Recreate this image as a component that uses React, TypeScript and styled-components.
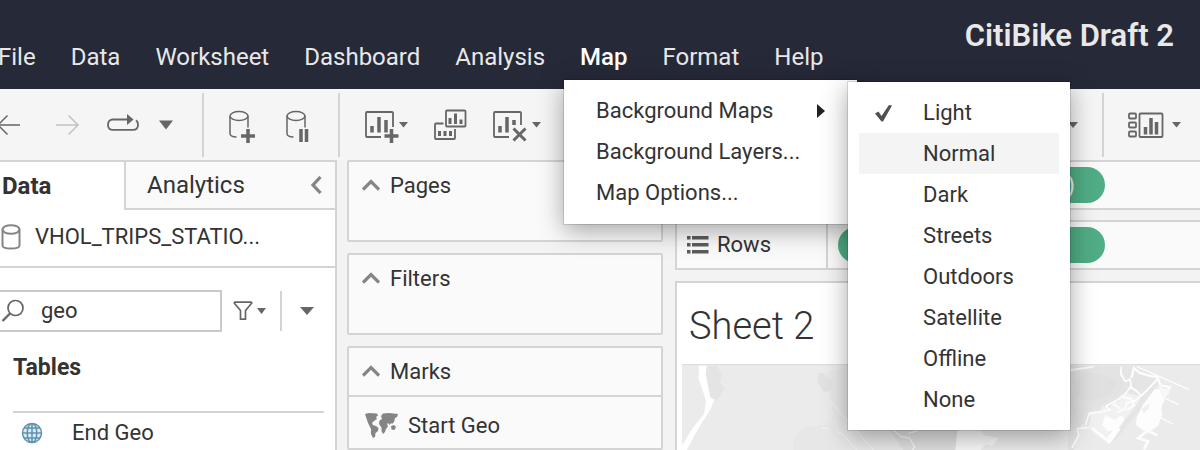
import React from "react";
import styled, { createGlobalStyle, css } from "styled-components";

const ink = "#333333";
const icon = "#666666";
const line = "#d4d4d4";
const green = "#50ad85";

const GlobalStyle = createGlobalStyle`
  *, *::before, *::after { box-sizing: border-box; }
  body {
    margin: 0;
    background: #f3f3f3;
    color: ${ink};
    font-family: Roboto, "Liberation Sans", sans-serif;
    font-size: 22px;
    line-height: 32px;
  }
  button, input { font: inherit; color: inherit; }
  svg { display: block; flex: none; }
`;

const bareButton = css`
  border: 0;
  padding: 0;
  background: none;
  cursor: pointer;
`;

const Page = styled.div`
  display: flex;
  flex-direction: column;
  height: 100vh;
  overflow: hidden;
`;

/* ---------- Header and menus ---------- */

const Header = styled.header`
  display: flex;
  justify-content: space-between;
  flex: none;
  padding: 18px 26px 16px 0;
  background: #262938;
  color: #e8e8e8;
`;

const MenuBar = styled.nav`
  display: flex;
  align-self: flex-end;
  gap: 35px;
  margin-left: -2px;
  padding-top: 23px;
  font-size: 24px;
`;

const MenuSlot = styled.div`
  position: relative;
`;

const MenuButton = styled.button<{ $open?: boolean }>`
  ${bareButton}
  display: block;
  color: ${(p) => (p.$open ? "#ffffff" : "#e8e8e8")};
  font-weight: ${(p) => (p.$open ? 500 : 400)};
`;

const WorkbookTitle = styled.h1`
  margin: 0;
  font-size: 31px;
  font-weight: 600;
  line-height: 36px;
`;

const Popup = styled.div`
  position: absolute;
  z-index: 2;
  background: #ffffff;
  color: ${ink};
  font-size: 22px;
  box-shadow: 0 0 0 1px rgba(0, 0, 0, 0.12), 0 6px 24px rgba(0, 0, 0, 0.36);
`;

const MapMenu = styled(Popup)`
  top: calc(100% + 7px);
  left: -16px;
  width: 293px;
  padding: 10px 10px 11px;
`;

const BasemapMenu = styled(Popup)`
  top: 2px;
  left: 284px;
  width: 222px;
  padding: 10px 11px;
`;

const MenuRow = styled.button<{ $hover?: boolean; $indent: number }>`
  ${bareButton}
  display: flex;
  align-items: center;
  width: 100%;
  height: 41px;
  padding-left: ${(p) => p.$indent}px;
  padding-right: 22px;
  background: ${(p) => (p.$hover ? "#f4f4f4" : "transparent")};
  text-align: left;
  white-space: nowrap;
  > svg:last-child { margin-left: auto; }
`;

const CheckSlot = styled.span`
  display: flex;
  width: 48px;
`;

/* ---------- Toolbar ---------- */

const Toolbar = styled.div`
  display: flex;
  align-items: center;
  flex: none;
  height: 71px;
  background: #f5f5f5;
`;

const ToolGroup = styled.div<{ $edge?: boolean; $end?: boolean }>`
  display: flex;
  gap: 24px;
  padding: 0 24px 0 ${(p) => (p.$edge ? 0 : 24)}px;
  margin-left: ${(p) => (p.$end ? "auto" : 0)};
`;

const LastToolGroup = styled(ToolGroup)`
  padding-right: 18px;
`;

const Tool = styled.button`
  ${bareButton}
  display: flex;
`;

const Rule = styled.span<{ $h: number }>`
  flex: none;
  width: 2px;
  height: ${(p) => p.$h}px;
  background: ${line};
`;

/* ---------- Data pane ---------- */

const Workspace = styled.div`
  display: flex;
  flex: 1;
  min-height: 0;
`;

const DataPane = styled.aside`
  flex: none;
  width: 337px;
  border: solid ${line};
  border-width: 2px 2px 0 0;
  background: #ffffff;
`;

const Tabs = styled.div`
  display: flex;
  height: 48px;
  font-size: 24px;
`;

const DataTab = styled.button`
  ${bareButton}
  width: 124px;
  padding-left: 2px;
  text-align: left;
  font-weight: 700;
`;

const AnalyticsTab = styled.div`
  display: flex;
  flex: 1;
  align-items: center;
  justify-content: space-between;
  padding: 0 13px 0 21px;
  border: solid ${line};
  border-width: 0 0 2px 2px;
  background: #fafafa;
`;

const PlainButton = styled.button`
  ${bareButton}
`;

const Source = styled.div`
  display: flex;
  align-items: center;
  gap: 14px;
  height: 58px;
  padding: 0 0 2px 1px;
  border-bottom: 2px solid ${line};
`;

const SearchRow = styled.div`
  display: flex;
  align-items: center;
  padding: 22px 21px 18px 0;
`;

const SearchBox = styled.label`
  display: flex;
  align-items: center;
  flex: 1;
  gap: 16px;
  min-width: 0;
  height: 42px;
  border: 2px solid #c9c9c9;
  border-left: 0;
`;

const SearchInput = styled.input`
  flex: 1;
  min-width: 0;
  padding: 0;
  border: 0;
  outline: 0;
  background: none;
`;

const SearchTools = styled.div`
  display: flex;
  align-items: center;
  padding-left: 11px;
  gap: 13px;
`;

const FilterTool = styled.button`
  ${bareButton}
  display: flex;
  align-items: center;
  gap: 4px;
  padding-right: 1px;
`;

const MoreTool = styled.button`
  ${bareButton}
  display: flex;
  padding-left: 5px;
`;

const Tables = styled.section`
  padding: 0 11px 0 13px;
`;

const TablesTitle = styled.h2`
  margin: 0;
  padding: 1px 0 26px;
  border-bottom: 2px solid ${line};
  font-size: 23px;
  line-height: 34px;
`;

const Field = styled.div`
  display: flex;
  align-items: center;
  gap: 29px;
  padding: 4px 0 0 8px;
`;

/* ---------- Cards ---------- */

const Cards = styled.div`
  display: flex;
  flex: none;
  flex-direction: column;
  gap: 11px;
  width: 338px;
  padding: 0 12px 0 10px;
`;

const Card = styled.section<{ $grow?: boolean }>`
  flex: ${(p) => (p.$grow ? "1" : "none")};
  min-height: 82px;
  border: 2px solid ${line};
  border-radius: 2px;
  background: #fafafa;
`;

const CardTitle = styled.button<{ $line?: boolean }>`
  ${bareButton}
  display: flex;
  align-items: center;
  gap: 10px;
  width: 100%;
  height: ${(p) => (p.$line ? 49 : 48)}px;
  padding-left: 13px;
  border-bottom: ${(p) => (p.$line ? `2px solid ${line}` : "0")};
`;

const Mark = styled.div`
  display: flex;
  align-items: center;
  gap: 10px;
  padding: 13px 0 0 16px;
`;

/* ---------- Shelves and view ---------- */

const Stage = styled.main`
  display: flex;
  flex: 1;
  flex-direction: column;
  gap: 10px;
  min-width: 0;
`;

const Shelf = styled.div`
  display: flex;
  flex: none;
  height: 50px;
  border: solid ${line};
  border-width: 2px 0 2px 2px;
  background: #fafafa;
`;

const ShelfLabel = styled.div`
  display: flex;
  align-items: center;
  gap: 8px;
  width: 151px;
  padding-left: 10px;
  border-right: 2px solid ${line};
`;

const Pill = styled.div`
  width: 267px;
  height: 36px;
  margin: 5px 0 0 10px;
  padding: 2px 30px 0 0;
  border-radius: 18px;
  background: ${green};
  color: #e4f3ec;
  font-size: 24px;
  text-align: right;
`;

const View = styled.section`
  display: flex;
  flex: 1;
  flex-direction: column;
  min-height: 0;
  margin-top: 1px;
  padding-left: 5px;
  border: solid ${line};
  border-width: 2px 0 0 2px;
  background: #ffffff;
`;

const SheetTitle = styled.h2`
  margin: 0;
  padding: 21px 0 16px 7px;
  font-size: 38px;
  font-weight: 300;
  line-height: 44px;
`;

const MapCanvas = styled.div`
  flex: 1;
  min-height: 0;
  overflow: hidden;
  background: #ebebeb;
`;

/* ---------- Drawings ---------- */

const Caret = ({ w = 10, h = 6 }: { w?: number; h?: number }) => (
  <svg width={w} height={h} viewBox="0 0 10 6" preserveAspectRatio="none">
    <path d="M0 0h10L5 6z" fill={icon} />
  </svg>
);

const Drawing = ({ w, children }: { w: number; children: React.ReactNode }) => (
  <svg width={w} height="40" viewBox={`0 0 ${w} 40`} fill="none" stroke={icon} strokeWidth="1.5">
    {children}
  </svg>
);

const Chevron = ({ d, w, h }: { d: string; w: number; h: number }) => (
  <svg width={w} height={h} viewBox={`0 0 ${w} ${h}`} fill="none" stroke="#858585" strokeWidth="3.2">
    <path d={d} />
  </svg>
);

const UpChevron = () => <Chevron w={18} h={16} d="M1 11.5l8-8 8 8" />;

const Cylinder = () => (
  <>
    <ellipse cx="11" cy="11" rx="9" ry="4.5" />
    <path d="M2 11v17.500c0 2 2.500 3.400 6.500 3.400M20 11v11.500" />
  </>
);

const CheckIcon = () => (
  <svg width="18" height="18" viewBox="0 0 18 18" fill="#505050">
    <path d="M0 9.500l3.500-2 3 4.500L14 1l3 .5L8 17.500H6.500z" />
  </svg>
);

const DatabaseIcon = () => (
  <svg width="20" height="26" viewBox="0 0 20 26" fill="none" stroke="#858585" strokeWidth="2">
    <ellipse cx="10" cy="5.500" rx="8.500" ry="4.300" />
    <path d="M1.500 5.500v16c0 2 3.500 3 8.500 3s8.500-1 8.500-3v-16" />
  </svg>
);

const SearchIcon = () => (
  <svg width="25" height="24" viewBox="0 0 25 24" fill="none" stroke={icon} strokeWidth="1.700">
    <circle cx="15.500" cy="9" r="7.500" />
    <path d="M10 14.500L2.500 22" strokeWidth="2.400" />
  </svg>
);

const FunnelIcon = () => (
  <svg width="20" height="20" viewBox="0 0 20 20" fill="none" stroke={icon} strokeWidth="1.700">
    <path d="M1.200 2q0-.8.800-.8h16q.8 0 .8.800L12.500 9.500v8.700h-5V9.500z" strokeLinejoin="round" />
  </svg>
);

const GlobeIcon = () => (
  <svg width="22" height="22" viewBox="0 0 22 22" fill="none" stroke="#5f93b0" strokeWidth="1.500">
    <circle cx="11" cy="11" r="9.500" fill="#dcebf3" />
    <ellipse cx="11" cy="11" rx="4.800" ry="9.500" />
    <path d="M11 1.500v19M1.500 11h19M3 6h16M3 16h16" />
  </svg>
);

const WorldIcon = () => (
  <svg width="33" height="26" viewBox="0 0 33 26" fill="#858585">
    <path d="M0 1l4-1 8 .5 1 2-2 1.500 1 2-3 2-2 2 1 2 3 1 2.500 2-.5 3-2.500 2-.5 4-2 1-2-4 0-5-1.500-3-1.500-3L2 7 1 4z" />
    <path d="M16 3l2-2.500 6-.5 9 1-1 3-2 1-1 4-2 2-1-1-1.500 2-1.500-2-1 1 1 2-2 3-1 3-2 2-1.500-3v-3.500L14 11l.5-3.500L17 6z" />
    <path d="M26 13l3-1 2 2-1.500 3-3-.5z" />
  </svg>
);

const RowsIcon = () => (
  <svg width="22" height="18" viewBox="0 0 22 18" fill="#5c5c5c">
    <path d="M0 0h3.500v3.500H0zM5 0h16.500v3.500H5zM0 7h3.500v3.500H0zM5 7h16.500v3.500H5zM0 14h3.500v3.500H0zM5 14h16.500v3.500H5z" />
  </svg>
);

const Basemap = () => (
  <svg width="518" height="86" viewBox="66 492 1554 258">
    <path d="M66 492h1554v4H66z" fill="#dedede" />
    <path d="M500 520l60-24h230v254H470l10-60 40-40z" fill="#e8e8e8" />
    <path d="M400 750l0-40 40-30 70-8 40 30 40 48z" fill="#e7e7e7" />
    <path d="M140 498h30l16 24-6 26 14 18-24 36-22-14-12-50z" fill="#e4e4e4" />
    <path d="M117 497h23l-3 25 14 70 12 8-14 32-18 28-24 40-26 50H66v-14l34-54 32-40 6-40-22-66z" fill="#fff" />
    <path d="M475 520l12-2 28 24-2 28-20 8-20-30z" fill="#e2e2e2" />
    <g fill="none" stroke="#f6f6f6">
      <path d="M510 602l60 70 70 78M530 694l20 10 40 46" strokeWidth="3" />
      <path d="M484 686l16-2 10 6" strokeWidth="3" />
    </g>
    <g transform="translate(540 0)">
      <path d="M150 690h240l-30 60H190z" fill="#dfdfdf" />
      <path d="M352 690h70l10 16 46 8-22 24-18-6-16 18h-76z" fill="#f8f8f8" />
      <path d="M160 690l24 20 24 4 16 26-6 10M205 700l30-8" fill="none" stroke="#f8f8f8" strokeWidth="4" />
    </g>
    <g transform="translate(1224 486)">
      <path d="M0 12h156l2 30 20 24-20 40-50 42-40 4-30 40-20 72H0z" fill="#e3e3e3" />
      <path d="M20 60l36-30 60 10 30 24-20 34-60 20-44-14z" fill="#e0e0e0" />
      <path d="M156 12h56l40 24 24 20-40 60-70 90-40 42-66-50-22-20 24-34 56-24 50-40 6-24z" fill="#e5e5e5" />
      <path d="M0 22l60-8 22-2-10 6-56 8-16 3z" fill="#fbfbfb" />
      <path d="M62 150l34-4 8-14 20 8 10-20 20-2 4-14 18-12 22 6 18 4-2 22-94 124-60-50 8-30z" fill="#f1f1f1" />
      <path d="M206 166l18-36 22-30 14-18h26l4 30-10 26 2 20-12 34-18 12-26 2-22-18z" fill="#fdfdfd" />
      <path d="M270 72l24 10 18-14-10 28-16 16z" fill="#f8f8f8" />
      <path d="M76 196l40 32 50-58 6 10-46 66-56-44z" fill="#fdfdfd" />
      <path d="M112 160l30 14 16-14 12 10-30 34-20 4-18-18z" fill="#fdfdfd" />
      <path d="M212 120l22-28 10 2-84 108-8-4z" fill="#e6e6e6" />
      <path d="M222 140l22-16-2 16-16 14z" fill="#efefef" />
      <g fill="none" stroke="#fdfdfd">
        <path d="M160 14l-2 22 14 22 14-6 4 20-18 24-24 18-34 18 12 12-28 6-34 4-12 36" strokeWidth="5" />
        <path d="M190 48l8-30 16 14 26 8 28 6 10 24 30 6" strokeWidth="7" />
        <path d="M206 14l60 26 96 42M286 106l46 22M276 166l38 20" strokeWidth="4" />
        <path d="M268 52l-34 36-32 28-26 6-6 20-24 10" strokeWidth="6" />
        <path d="M184 74l20 12 18 18M164 106l26 4 8 20-22 14M136 126l22 14" strokeWidth="6" />
        <path d="M62 196l-34 4 4 20-14 26-6 12" strokeWidth="5" />
        <path d="M204 176l36 30 28 14M240 206l-30 22 30 10-12 24" strokeWidth="8" />
      </g>
    </g>
  </svg>
);

const menus = ["File", "Data", "Worksheet", "Dashboard", "Analysis", "Map", "Format", "Help"];
const basemaps = ["Light", "Normal", "Dark", "Streets", "Outdoors", "Satellite", "Offline", "None"];

const MapDropdown = () => (
  <MapMenu role="menu">
    <MenuRow $indent={22} role="menuitem">
      Background Maps
      <svg width="9" height="14" viewBox="0 0 9 14">
        <path d="M1 0l8 7-8 7z" fill="#222" />
      </svg>
    </MenuRow>
    <MenuRow $indent={22} role="menuitem">Background Layers...</MenuRow>
    <MenuRow $indent={22} role="menuitem">Map Options...</MenuRow>
    <BasemapMenu role="menu">
      {basemaps.map((name) => (
        <MenuRow key={name} $indent={16} $hover={name === "Normal"} role="menuitem">
          <CheckSlot>{name === "Light" && <CheckIcon />}</CheckSlot>
          {name}
        </MenuRow>
      ))}
    </BasemapMenu>
  </MapMenu>
);

export default function App() {
  return (
    <Page>
      <GlobalStyle />
      <Header>
        <MenuBar>
          {menus.map((name) => (
            <MenuSlot key={name}>
              <MenuButton $open={name === "Map"}>{name}</MenuButton>
              {name === "Map" && <MapDropdown />}
            </MenuSlot>
          ))}
        </MenuBar>
        <WorkbookTitle>CitiBike Draft 2</WorkbookTitle>
      </Header>

      <Toolbar>
        <ToolGroup $edge>
          <Tool aria-label="Undo">
            <Drawing w={30}>
              <path d="M-2 20h22M7.500 10.500L-2 20l9.500 9.500" />
            </Drawing>
          </Tool>
          <Tool aria-label="Redo">
            <Drawing w={28}>
              <path d="M2 20h22M14.500 10.500L24 20l-9.500 9.500" stroke="#c2c2c2" />
            </Drawing>
          </Tool>
          <Tool aria-label="Replay">
            <Drawing w={72}>
              <path d="M21 14.500H7q-5 0-5 5.200t5 5.200h20q5 0 5-5.200 0-3-2-4.500" strokeWidth="1.800" />
              <path d="M21 9l6.500 5.500-6.500 5.500z" fill={icon} stroke="none" />
              <path d="M53 15.500h14l-7 9z" fill={icon} stroke="none" />
            </Drawing>
          </Tool>
        </ToolGroup>
        <Rule $h={64} />
        <ToolGroup>
          <Tool aria-label="New data source">
            <Drawing w={32}>
              <Cylinder />
              <path d="M20 24v14M13 31h14" strokeWidth="3.500" />
            </Drawing>
          </Tool>
          <Tool aria-label="Pause updates">
            <Drawing w={30}>
              <g transform="translate(1 0)">
                <Cylinder />
              </g>
              <path d="M17 24v13M22.500 24v13" strokeWidth="3.500" />
            </Drawing>
          </Tool>
        </ToolGroup>
        <Rule $h={64} />
        <ToolGroup>
          <Tool aria-label="New worksheet">
            <Drawing w={46}>
              <path d="M17 32H3q-1 0-1-1V8q0-1 1-1h25q1 0 1 1v14" strokeWidth="1.800" />
              <path d="M8 21v6.500M15 12v15.500M22 15v12.500" strokeWidth="3.500" />
              <path d="M27.500 24v14M20.500 31h14" strokeWidth="3.500" />
              <path d="M35 17h9l-4.500 5.500z" fill={icon} stroke="none" />
            </Drawing>
          </Tool>
          <Tool aria-label="Duplicate">
            <Drawing w={34}>
              <rect x="12" y="5.500" width="19.500" height="16" rx="1" strokeWidth="1.800" />
              <path d="M16 13v6M21.500 8.500V19M27 14.500V19" strokeWidth="3" />
              <path d="M9.500 18.500H2q-1 0-1 1V33q0 1 1 1h18q1 0 1-1v-9" strokeWidth="1.800" />
              <path d="M5.500 26v5M11 26v5M16.500 26v5" strokeWidth="3" />
            </Drawing>
          </Tool>
          <Tool aria-label="Clear sheet">
            <Drawing w={50}>
              <path d="M17 32H3q-1 0-1-1V8q0-1 1-1h25q1 0 1 1v12" strokeWidth="1.800" />
              <path d="M8 21v6.500M15 12v15.500M22 15v5" strokeWidth="3.500" />
              <path d="M21.500 23.500l12 12M33.500 23.500l-12 12" strokeWidth="3" />
              <path d="M40 17h9l-4.500 5.500z" fill={icon} stroke="none" />
            </Drawing>
          </Tool>
        </ToolGroup>
        <ToolGroup $end>
          <Tool aria-label="Fit">
            <Caret />
          </Tool>
        </ToolGroup>
        <Rule $h={64} />
        <LastToolGroup>
          <Tool aria-label="Show Me">
            <Drawing w={54}>
              <rect x="1" y="8.500" width="7" height="5" rx="1" strokeWidth="1.800" />
              <rect x="1" y="17.500" width="7" height="5" rx="1" strokeWidth="1.800" />
              <rect x="1" y="26.500" width="7" height="5" rx="1" strokeWidth="1.800" />
              <rect x="11.500" y="8.500" width="23" height="23.500" rx="1" strokeWidth="1.800" />
              <path d="M17.500 22v7.500M23 13v16.500M28.500 17v12.500" strokeWidth="3.500" />
              <path d="M44 17h9l-4.500 5.500z" fill={icon} stroke="none" />
            </Drawing>
          </Tool>
        </LastToolGroup>
      </Toolbar>

      <Workspace>
        <DataPane>
          <Tabs>
            <DataTab>Data</DataTab>
            <AnalyticsTab>
              <PlainButton>Analytics</PlainButton>
              <PlainButton aria-label="Collapse pane">
                <Chevron w={12} h={18} d="M10.500 1L3 9l7.500 8" />
              </PlainButton>
            </AnalyticsTab>
          </Tabs>
          <Source>
            <DatabaseIcon />
            VHOL_TRIPS_STATIO...
          </Source>
          <SearchRow>
            <SearchBox>
              <SearchIcon />
              <SearchInput aria-label="Search fields" defaultValue="geo" />
            </SearchBox>
            <SearchTools>
              <FilterTool aria-label="Filter fields">
                <FunnelIcon />
                <Caret w={9} />
              </FilterTool>
              <Rule $h={40} />
              <MoreTool aria-label="More options">
                <Caret w={14} h={8} />
              </MoreTool>
            </SearchTools>
          </SearchRow>
          <Tables>
            <TablesTitle>Tables</TablesTitle>
            <Field>
              <GlobeIcon />
              End Geo
            </Field>
          </Tables>
        </DataPane>

        <Cards>
          {["Pages", "Filters"].map((name) => (
            <Card key={name}>
              <CardTitle>
                <UpChevron />
                {name}
              </CardTitle>
            </Card>
          ))}
          <Card $grow>
            <CardTitle $line>
              <UpChevron />
              Marks
            </CardTitle>
            <Mark>
              <WorldIcon />
              Start Geo
            </Mark>
          </Card>
        </Cards>

        <Stage>
          <Shelf aria-label="Columns">
            <ShelfLabel />
            <Pill>)</Pill>
          </Shelf>
          <Shelf>
            <ShelfLabel>
              <RowsIcon />
              Rows
            </ShelfLabel>
            <Pill />
          </Shelf>
          <View>
            <SheetTitle>Sheet 2</SheetTitle>
            <MapCanvas>
              <Basemap />
            </MapCanvas>
          </View>
        </Stage>
      </Workspace>
    </Page>
  );
}
